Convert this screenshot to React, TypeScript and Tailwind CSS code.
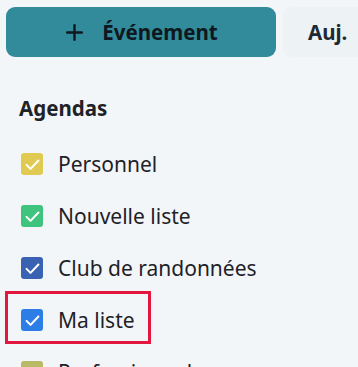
import { Plus } from 'lucide-react';

const agendas = [
  { name: 'Personnel', color: 'bg-[#e0ca52]' },
  { name: 'Nouvelle liste', color: 'bg-[#3ec47c]' },
  { name: 'Club de randonnées', color: 'bg-[#3a62b3]' },
  { name: 'Ma liste', color: 'bg-[#2d7de6]', highlight: true },
  { name: 'Professionnel', color: 'bg-[#b9ba66]' },
];

function Check({ color }: { color: string }) {
  return (
    <span className={`flex h-[22px] w-[22px] shrink-0 items-center justify-center rounded-[3px] ${color}`}>
      <svg viewBox="0 0 24 24" className="h-[19px] w-[19px]" fill="none" stroke="white" strokeWidth="2.6" strokeLinecap="round" strokeLinejoin="round">
        <path d="M4.5 12.5l5 5L19.5 7" />
      </svg>
    </span>
  );
}

export default function App() {
  return (
    <div className="h-[367px] w-[358px] overflow-hidden bg-[#f3f6f9] text-[#1e2227]" style={{ fontFamily: '"Noto Sans", sans-serif' }}>
      <div className="flex gap-[7px] pl-[6px] pt-[7px]">
        <button className="flex h-[50px] w-[270px] shrink-0 items-center justify-center gap-[15px] rounded-[9px] bg-[#328b9b] pr-[2px] text-[20.5px] font-bold text-[#0f1720]">
          <Plus className="h-[25px] w-[25px]" strokeWidth={2.3} />
          Événement
        </button>
        <button className="flex h-[50px] w-[100px] shrink-0 items-center rounded-[9px] bg-[#edf2f5] pl-[25px] text-[20.5px] font-bold text-[#1e2a33]">
          Auj.
        </button>
      </div>

      <div className="px-[19px] pt-[37px]">
        <h2 className="text-[20.5px] font-bold leading-[28px]">Agendas</h2>
        <ul className="mt-[16px]">
          {agendas.map((a) => (
            <li key={a.name} className="relative flex h-[52px] items-center gap-[15px] pl-[2px]">
              <Check color={a.color} />
              <span className="text-[21px] leading-none">{a.name}</span>
              {a.highlight && (
                <span className="pointer-events-none absolute left-[-14px] top-[-3px] h-[53px] w-[146px] border-[3px] border-[#e2163f]" />
              )}
            </li>
          ))}
        </ul>
      </div>
    </div>
  );
}
